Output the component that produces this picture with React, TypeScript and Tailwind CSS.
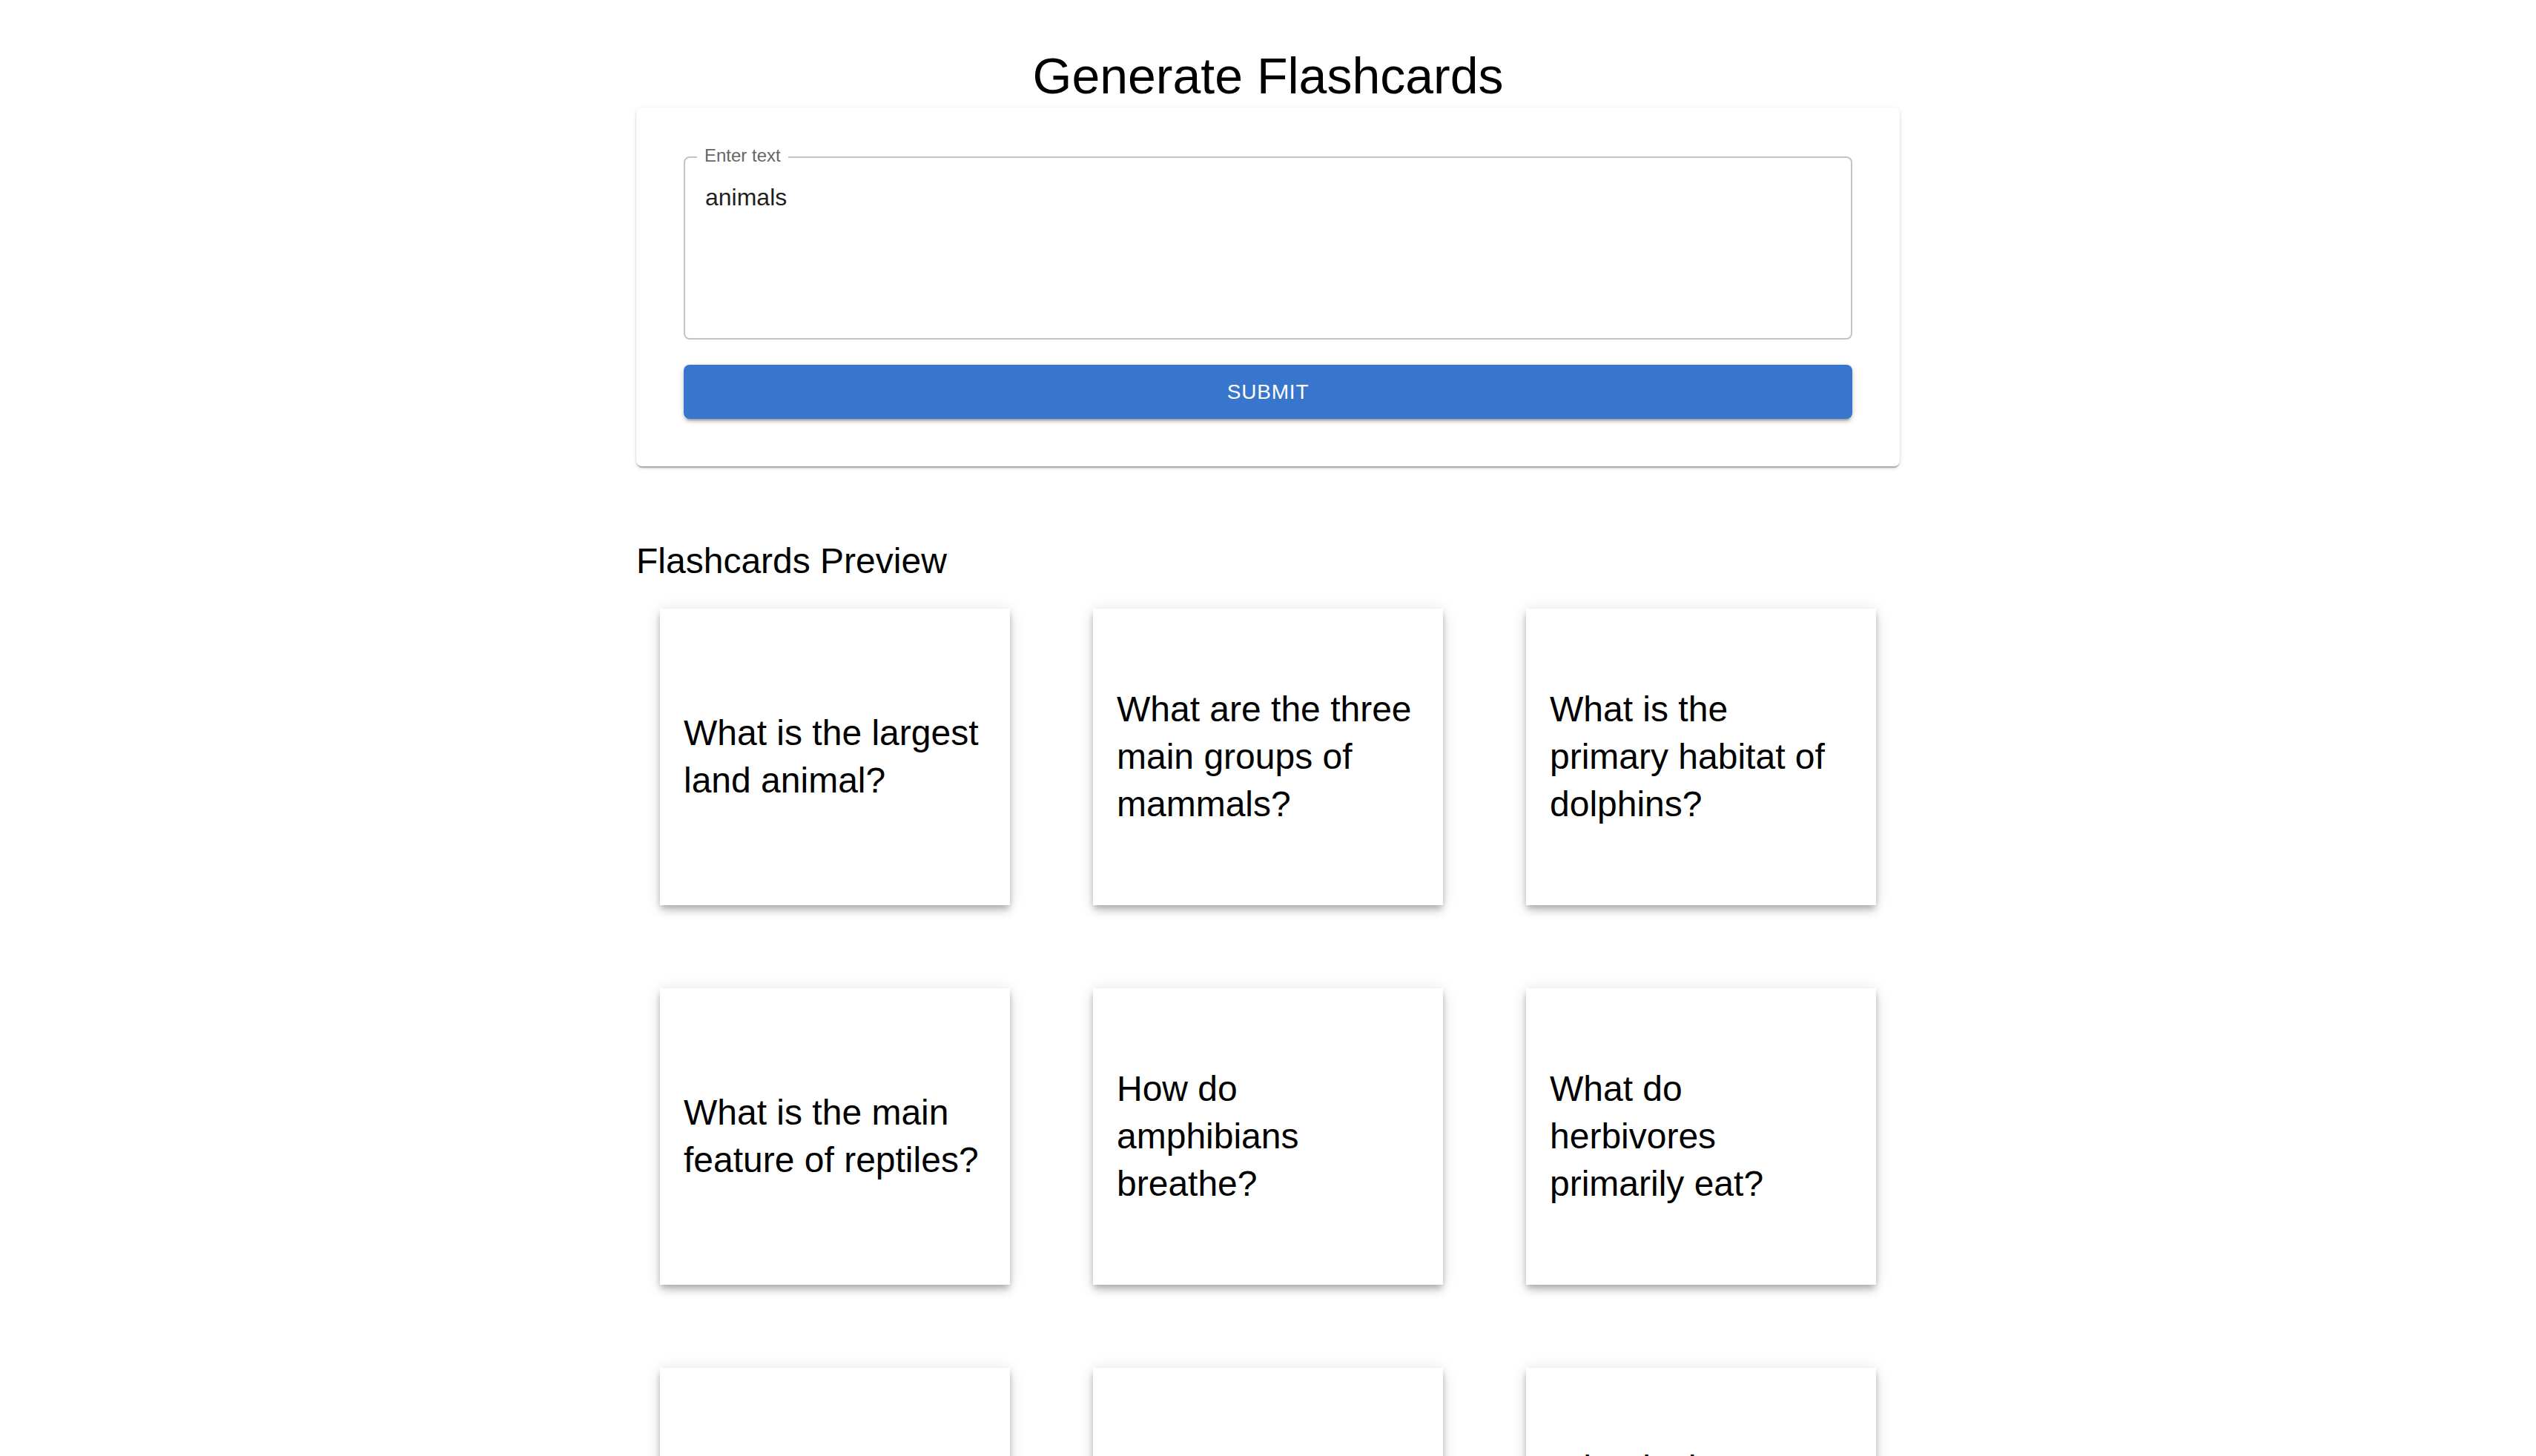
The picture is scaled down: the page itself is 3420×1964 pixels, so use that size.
import React from "react";

const cards = [
  "What is the largest land animal?",
  "What are the three main groups of mammals?",
  "What is the primary habitat of dolphins?",
  "What is the main feature of reptiles?",
  "How do amphibians breathe?",
  "What do herbivores primarily eat?",
  "What is a carnivore?",
  "How do birds fly?",
  "What is the process of metamorphosis?",
];

export default function App() {
  return (
    <div className="min-h-screen bg-white font-['Liberation_Sans',Arial,sans-serif] text-black">
      <div className="mx-auto w-[1704px] pt-[60px]">
        <h1 className="m-0 h-[85px] text-center text-[68px] leading-[84px] font-normal text-black">
          Generate Flashcards
        </h1>
        <div className="rounded-[8px] bg-white px-[64px] pt-[66px] pb-[64px] shadow-[0_4px_2px_-2px_rgba(0,0,0,0.2),0_2px_2px_0_rgba(0,0,0,0.14),0_2px_6px_0_rgba(0,0,0,0.12)]">
          <div className="relative box-border h-[247px] rounded-[8px] border-2 border-[#c4c4c4] pl-[27px] pt-[30px]">
            <span className="absolute left-[16px] top-[-15px] bg-white px-[10px] text-[24px] leading-[24px] text-[#666666]">
              Enter text
            </span>
            <div className="text-[32px] leading-[46px] text-[#1f1f1f]">animals</div>
          </div>
          <button className="mt-[34px] flex h-[73px] w-full items-center justify-center rounded-[8px] bg-[#3875cc] text-[28px] font-medium tracking-[0.8px] text-white shadow-[0_6px_2px_-4px_rgba(0,0,0,0.2),0_4px_4px_0_rgba(0,0,0,0.14),0_2px_10px_0_rgba(0,0,0,0.12)]">
            SUBMIT
          </button>
        </div>
        <h2 className="mt-[96px] text-[48px] leading-[64px] font-normal text-black">
          Flashcards Preview
        </h2>
        <div className="grid grid-cols-[472px_472px_472px] gap-[112px] px-[32px] py-[32px]">
          {cards.map((c) => (
            <div
              key={c}
              className="flex h-[400px] items-center bg-white px-[32px] shadow-[0_4px_8px_-2px_rgba(0,0,0,0.2),0_8px_10px_0_rgba(0,0,0,0.14),0_2px_20px_0_rgba(0,0,0,0.12)]"
            >
              <p className="m-0 text-[48px] leading-[64px] text-black">{c}</p>
            </div>
          ))}
        </div>
      </div>
    </div>
  );
}
